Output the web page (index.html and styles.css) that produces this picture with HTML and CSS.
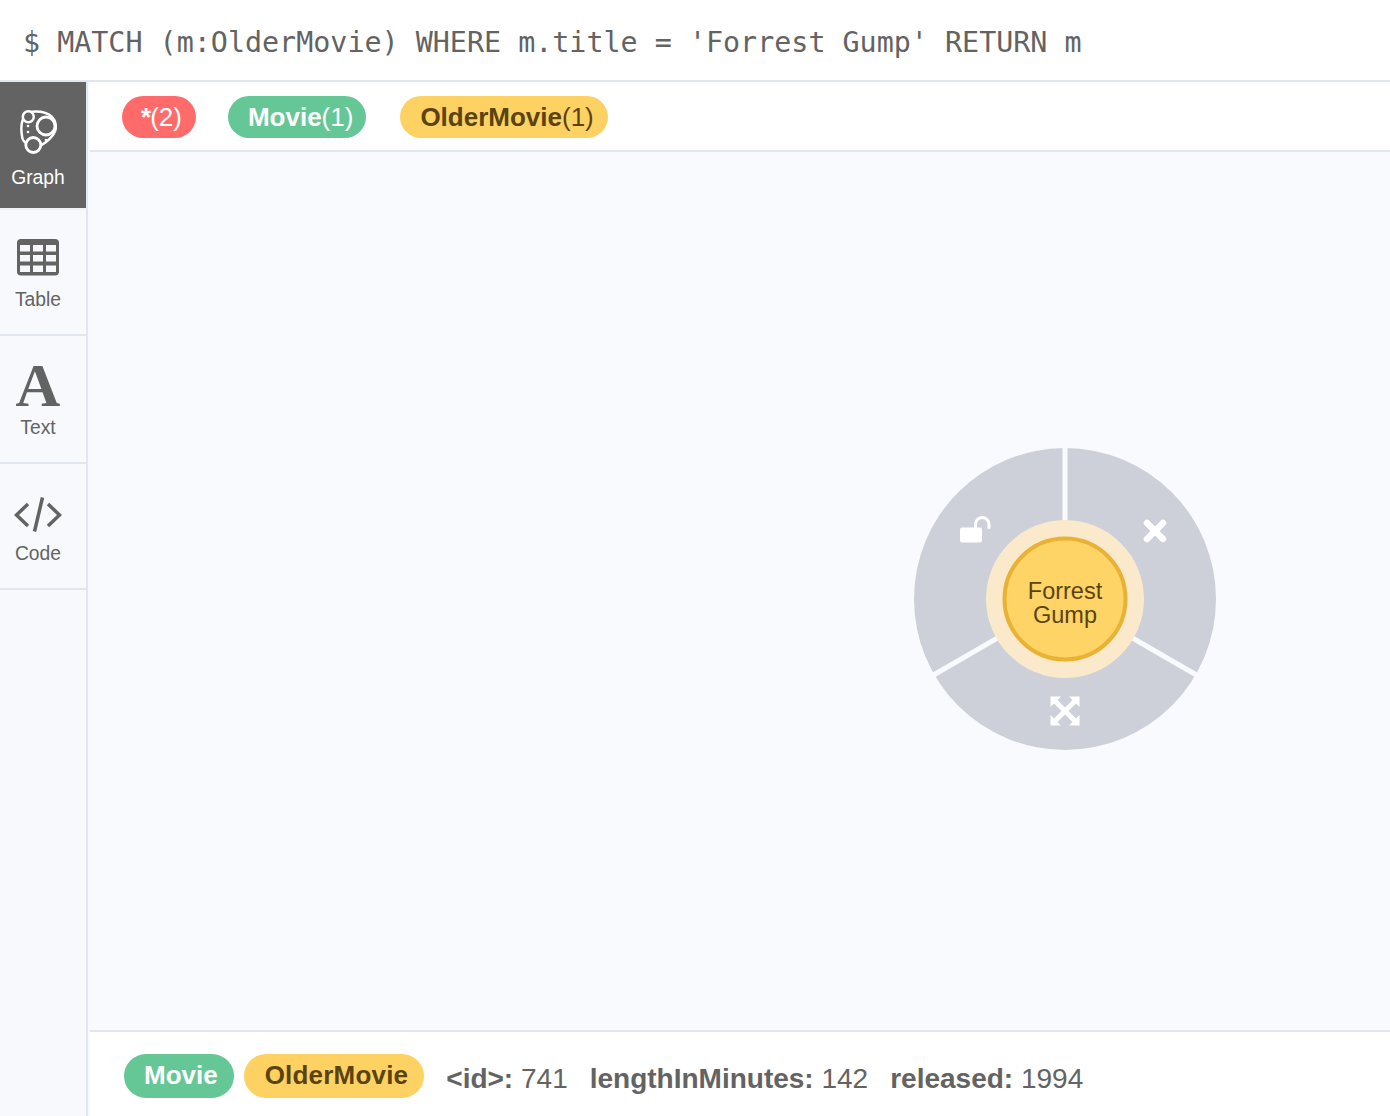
FILE: index.html
```html
<!DOCTYPE html>
<html lang="en">
<head>
    <meta charset="UTF-8" />
    <title>MATCH Forrest Gump</title>
    <link rel="stylesheet" href="styles.css">
</head>
<body>

<div class="query-bar">$ MATCH (m:OlderMovie) WHERE m.title = 'Forrest Gump' RETURN m</div>

<div class="frame">
    <div class="sidebar">
        <div class="tab tab-graph active">
            <svg class="tab-icon" width="38" height="48" viewBox="0 0 38 48" aria-hidden="true">
                <path d="M10 4 C18 3 28 4 33 9 C38 14 38 22 34 27 C30 32 26 36 20 38 H12 C7 36 3 33 3 28 C2 22 2 16 4 11 Z" fill="none" stroke="#fff" stroke-width="2.500"/>
                <circle cx="9.300" cy="8.700" r="5.500" fill="#636363" stroke="#fff" stroke-width="2.500"/>
                <circle cx="27" cy="18" r="9" fill="#636363" stroke="#fff" stroke-width="2.800"/>
                <circle cx="14.300" cy="37" r="7.500" fill="#636363" stroke="#fff" stroke-width="2.800"/>
                <circle cx="9" cy="18" r="1.300" fill="#fff"/>
                <circle cx="9" cy="24" r="1.300" fill="#fff"/>
                <circle cx="27" cy="32" r="1.300" fill="#fff"/>
            </svg>
            <span>Graph</span>
        </div>
        <div class="tab tab-table">
            <svg class="tab-icon" width="44" height="38" viewBox="0 0 44 38" aria-hidden="true">
                <rect x="1" y="1" width="42" height="36.500" rx="4" fill="#636363"/>
                <g fill="#f6f8fc">
                    <rect x="4" y="7" width="10" height="6.500"/><rect x="17" y="7" width="10" height="6.500"/><rect x="30" y="7" width="10" height="6.500"/>
                    <rect x="4" y="17" width="10" height="6.500"/><rect x="17" y="17" width="10" height="6.500"/><rect x="30" y="17" width="10" height="6.500"/>
                    <rect x="4" y="27.500" width="10" height="6.500"/><rect x="17" y="27.500" width="10" height="6.500"/><rect x="30" y="27.500" width="10" height="6.500"/>
                </g>
            </svg>
            <span>Table</span>
        </div>
        <div class="tab tab-text">
            <div class="big-a" aria-hidden="true">A</div>
            <span>Text</span>
        </div>
        <div class="tab tab-code">
            <svg class="tab-icon" width="48" height="38" viewBox="0 0 48 38" aria-hidden="true">
                <g fill="none" stroke="#636363" stroke-width="3.500">
                    <path d="M14 8 L2.500 19 L14 30"/>
                    <path d="M34 8 L45.500 19 L34 30"/>
                    <path d="M28.500 1.500 L20.500 35.500"/>
                </g>
            </svg>
            <span>Code</span>
        </div>
    </div>

    <div class="main">
        <div class="legend">
            <span class="pill pill-red"><b class="star">*</b>(2)</span>
            <span class="pill pill-green"><b>Movie</b>(1)</span>
            <span class="pill pill-yellow"><b>OlderMovie</b>(1)</span>
        </div>

        <div class="canvas">
            <svg class="wheel" width="310" height="310" viewBox="-155 -155 310 310">
                <circle r="151" fill="#cdd0d8"/>
                <g stroke="#f9fafd" stroke-width="5">
                    <line x1="0" y1="0" x2="0" y2="-155"/>
                    <line x1="0" y1="0" x2="134" y2="77.500"/>
                    <line x1="0" y1="0" x2="-134" y2="77.500"/>
                </g>
                <circle r="79" fill="#fae9ca"/>
                <circle r="60.500" fill="#fed467" stroke="#e9b234" stroke-width="4"/>
                <text class="node-label" text-anchor="middle" y="-0.500"><tspan x="0">Forrest</tspan><tspan x="0" dy="24">Gump</tspan></text>

                <!-- unlock -->
                <g transform="translate(-105 -83)">
                    <rect x="0" y="11.500" width="22" height="15" rx="2" fill="#fff"/>
                    <path d="M15.500 12 V8.250 A6.750 6.750 0 0 1 29 8.250 V11.500" fill="none" stroke="#fff" stroke-width="3" stroke-linecap="round"/>
                </g>
                <!-- close -->
                <g transform="translate(90 -68)" stroke="#fff" stroke-width="6.500" stroke-linecap="round">
                    <line x1="-8" y1="-8" x2="8" y2="8"/>
                    <line x1="8" y1="-8" x2="-8" y2="8"/>
                </g>
                <!-- expand -->
                <g transform="translate(0 112)" fill="#fff">
                    <path d="M-14.500 -14.500 H-4 L-7.500 -11 L0 -3.500 L7.500 -11 L4 -14.500 H14.500 V-4 L11 -7.500 L3.500 0 L11 7.500 L14.500 4 V14.500 H4 L7.500 11 L0 3.500 L-7.500 11 L-4 14.500 H-14.500 V4 L-11 7.500 L-3.500 0 L-11 -7.500 L-14.500 -4 Z"/>
                </g>
            </svg>
        </div>

        <div class="details">
            <span class="pill pill-green small"><b>Movie</b></span>
            <span class="pill pill-yellow small"><b class="older">OlderMovie</b></span>
            <span class="prop"><b>&lt;id&gt;:</b> 741</span>
            <span class="prop"><b>lengthInMinutes:</b> 142</span>
            <span class="prop"><b>released:</b> 1994</span>
        </div>
    </div>
</div>

</body>
</html>
```

FILE: styles.css
```css
* {
  box-sizing: border-box;
}
html, body {
  height: 100%;
}
body {
  margin: 0;
  background: #fff;
  color: #636363;
  font-family: 'Liberation Sans', Arial, sans-serif;
  overflow: hidden;
}
.query-bar {
  height: 82px;
  padding: 4px 0 0 23px;
  display: flex;
  align-items: center;
  font-family: 'DejaVu Sans Mono', monospace;
  font-size: 28.36px;
  white-space: pre;
  border-bottom: 2px solid #e2e6ee;
}
.frame {
  display: flex;
  height: 1034px;
  background: #f7f9fd;
}
.sidebar {
  width: 88px;
  flex: none;
  border-right: 2px solid #e2e6ee;
}
.tab {
  display: flex;
  flex-direction: column;
  align-items: center;
  padding-right: 10px;
  border-bottom: 2px solid #e2e6ee;
  font-size: 19.3px;
  line-height: 24px;
  color: #636363;
}
.tab-graph {
  height: 128px;
  padding-top: 26px;
}
.tab-graph.active {
  background: #636363;
  color: #fff;
  border-bottom-color: #f0f2f8;
}
.tab-graph span {
  margin-top: 10px;
}
.tab-table {
  height: 126px;
  padding-top: 28px;
}
.tab-table span {
  margin-top: 12px;
}
.tab-text {
  height: 128px;
  padding-top: 18px;
}
.big-a {
  font-family: 'Liberation Serif', serif;
  font-weight: 700;
  font-size: 62px;
  line-height: 62px;
  height: 62px;
}
.tab-code {
  height: 126px;
  padding-top: 32px;
}
.tab-code span {
  margin-top: 8px;
}
.tab-icon {
  display: block;
}
.main {
  flex: 1;
  margin-left: 2px;
  display: flex;
  flex-direction: column;
}
.legend {
  height: 70px;
  padding: 14px 0 0 32px;
  display: flex;
  gap: 32px;
  align-items: flex-start;
  background: #fff;
  border-bottom: 2px solid #e2e6ee;
}
.pill {
  display: inline-flex;
  align-items: center;
  height: 42px;
  padding: 0 14px 0 20px;
  border-radius: 21px;
  font-size: 26px;
  white-space: nowrap;
}
.star {
  letter-spacing: -1px;
}
.pill-red {
  padding: 0 14px 0 19px;
  background: #ff6b6b;
  color: #fff;
}
.legend .pill-green {
  padding-right: 13px;
  background: #65c796;
  color: #fff;
}
.pill-green {
  background: #65c796;
  color: #fff;
}
.pill-yellow {
  background: #fed262;
  color: #5a430f;
}
.legend .pill-yellow {
  margin-left: 2px;
}
.canvas {
  position: relative;
  flex: 1;
  background: #f9fafd;
}
.wheel {
  position: absolute;
  left: 820px;
  top: 292px;
}
.node-label {
  font-family: 'Liberation Sans', Arial, sans-serif;
  font-size: 23.5px;
  fill: #5a430f;
}
.details {
  height: 86px;
  padding: 22px 0 0 34px;
  display: flex;
  align-items: flex-start;
  gap: 10px;
  background: #fff;
  border-top: 2px solid #e2e6ee;
}
.pill.small {
  height: 44px;
  padding: 0 16px 2px 20px;
  border-radius: 22px;
}
.older {
  margin-left: 1px;
  letter-spacing: 0.2px;
}
.prop {
  font-size: 28px;
  line-height: 50px;
  margin-left: 12px;
  white-space: nowrap;
}
```
